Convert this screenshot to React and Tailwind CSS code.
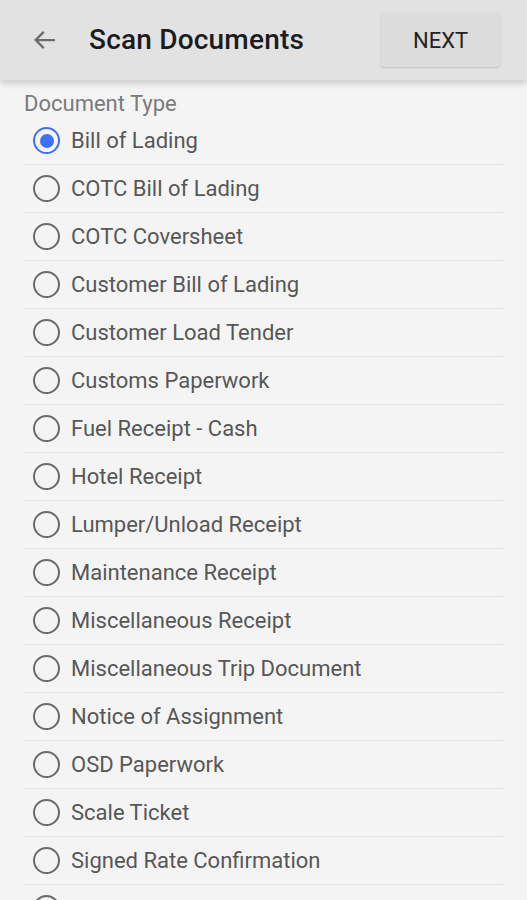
import { useState } from "react";

const docTypes = [
  "Bill of Lading",
  "COTC Bill of Lading",
  "COTC Coversheet",
  "Customer Bill of Lading",
  "Customer Load Tender",
  "Customs Paperwork",
  "Fuel Receipt - Cash",
  "Hotel Receipt",
  "Lumper/Unload Receipt",
  "Maintenance Receipt",
  "Miscellaneous Receipt",
  "Miscellaneous Trip Document",
  "Notice of Assignment",
  "OSD Paperwork",
  "Scale Ticket",
  "Signed Rate Confirmation",
  "Toll Receipt",
  "Trip Envelope",
];

function Radio({ checked }) {
  return (
    <span
      className={
        "flex h-[27px] w-[27px] shrink-0 items-center justify-center rounded-full border-[2.5px] " +
        (checked ? "border-[#3f6ff3]" : "border-[#6a6a6a]")
      }
    >
      {checked && <span className="h-[14px] w-[14px] rounded-full bg-[#3f6ff3]" />}
    </span>
  );
}

export default function App() {
  const [selected, setSelected] = useState(0);

  return (
    <div
      className="h-[900px] overflow-hidden bg-[#f4f4f4]"
      style={{ fontFamily: "Roboto, 'Noto Sans', sans-serif" }}
    >
      {/* top app bar */}
      <div className="relative z-10 flex h-[80px] items-center bg-[#e2e2e2] pl-[30px] pr-[27px] shadow-[0_3px_7px_rgba(0,0,0,0.18)]">
        <svg width="30" height="30" viewBox="0 0 24 24" className="text-[#6b6b6b]">
          <path
            d="M20 12H4.5M11 5.5L4.5 12l6.5 6.5"
            fill="none"
            stroke="currentColor"
            strokeWidth="1.8"
          />
        </svg>
        <h1 className="ml-[29px] text-[28px] font-medium tracking-[0.2px] text-[#1c1c1c]">
          Scan Documents
        </h1>
        <button className="ml-auto h-[54px] w-[119px] rounded-[3px] bg-[#dcdcdc] text-[22px] text-[#222] shadow-[0_1px_2px_rgba(0,0,0,0.15)]">
          NEXT
        </button>
      </div>

      <div className="px-[24px] pt-[10px]">
        <div className="text-[22px] leading-[27px] text-[#7a7a7a]">Document Type</div>
        <ul>
          {docTypes.map((name, i) => (
            <li
              key={name}
              onClick={() => setSelected(i)}
              className="flex h-[48px] items-center border-b border-[#e3e3e3] pl-[9px]"
            >
              <Radio checked={selected === i} />
              <span className="ml-[11px] text-[22px] text-[#575757]">{name}</span>
            </li>
          ))}
        </ul>
      </div>
    </div>
  );
}
